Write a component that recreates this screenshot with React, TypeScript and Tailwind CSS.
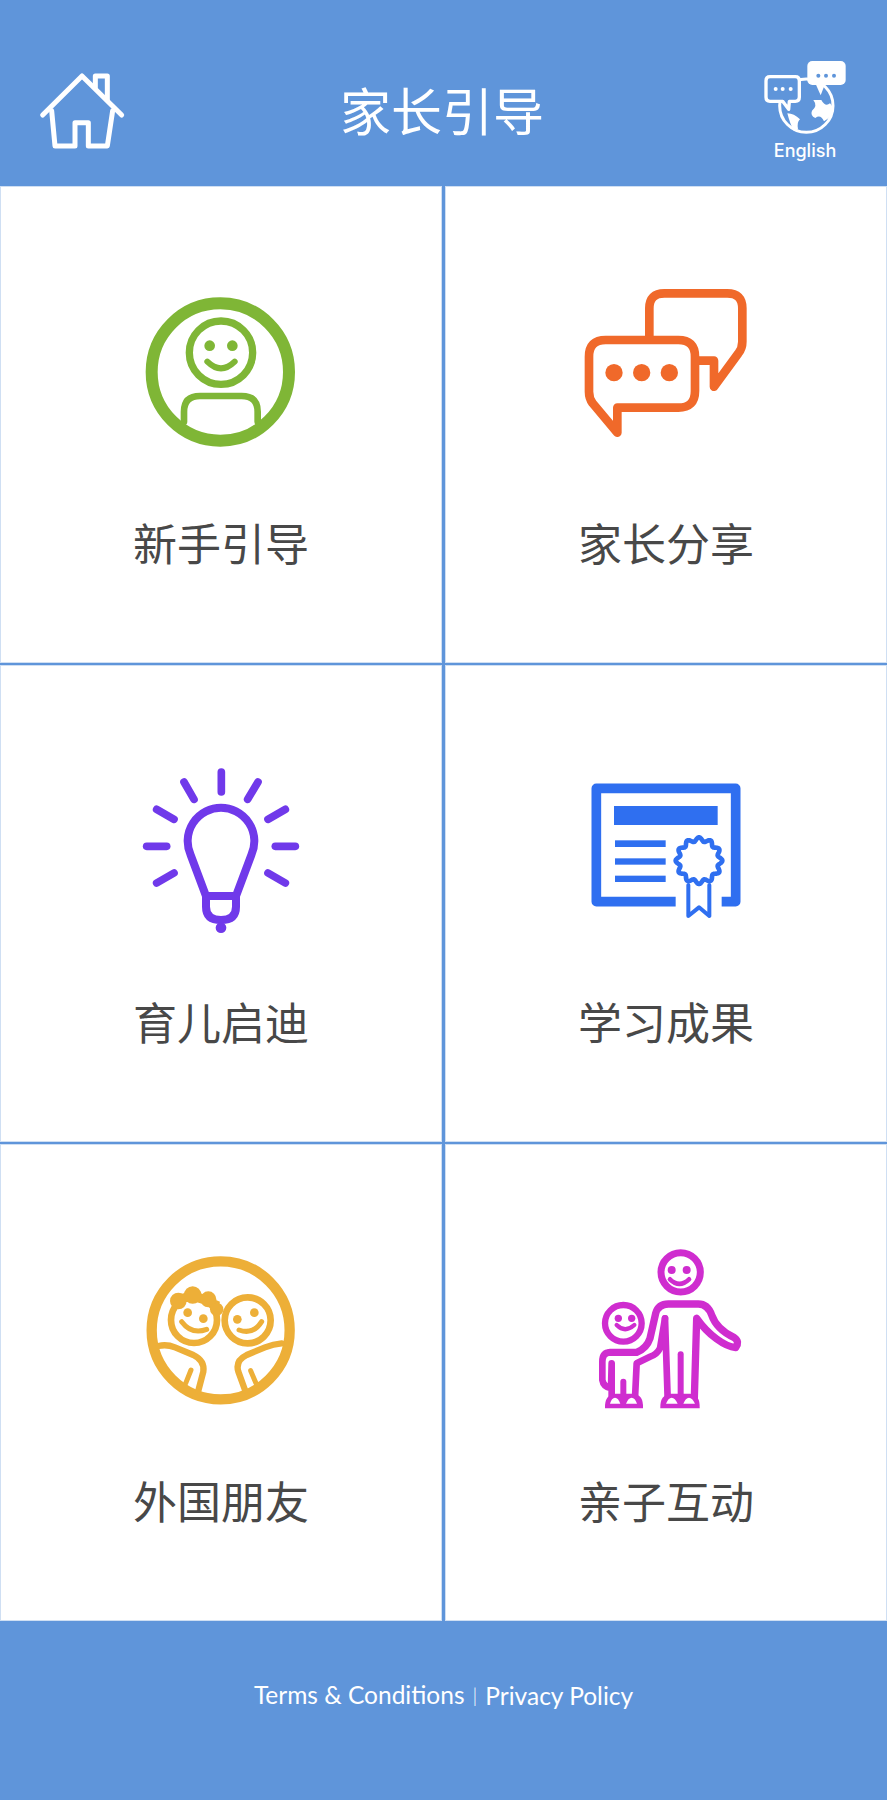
import type { ReactNode } from "react";

const rosette = () => {
  const pts: string[] = [];
  for (let i = 0; i < 180; i++) {
    const a = (i / 180) * Math.PI * 2;
    const r = 64 + 6 * Math.cos(a * 12);
    pts.push(`${(372 + r * Math.cos(a)).toFixed(1)},${(272 + r * Math.sin(a)).toFixed(1)}`);
  }
  return pts.join(" ");
};

function HomeIcon() {
  return (
    <svg width="120" height="120" viewBox="0 0 360 360" fill="none" stroke="#fff" strokeWidth="15" strokeLinejoin="round" strokeLinecap="round">
      <path d="M68 195 186 78 305 195" />
      <path d="M226 112V78H262V150" />
      <path d="M95 182 105 288H165V218H205V288H262L278 182" />
    </svg>
  );
}

function LanguageIcon() {
  return (
    <svg width="110" height="90" viewBox="0 0 330 270" fill="none">
      <circle cx="169" cy="167" r="80" stroke="#fff" strokeWidth="9" />
      <path d="M190 150Q204 168 186 182Q180 196 196 204Q212 192 222 214Q240 204 250 186Q250 170 240 160Q226 172 214 150Z" fill="#fff" />
      <path d="M112 190Q132 190 150 208Q140 216 144 238L132 244Q120 222 112 190Z" fill="#fff" />
      <rect x="172" y="33" width="115" height="72" rx="15" fill="#fff" />
      <path d="M196 100 212 136 226 100Z" fill="#fff" />
      <circle cx="205" cy="77" r="6" fill="#5f95da" />
      <circle cx="228" cy="77" r="6" fill="#5f95da" />
      <circle cx="252" cy="77" r="6" fill="#5f95da" />
      <path d="M60 80H136Q148 80 148 92V142Q148 154 136 154H118L116 178 98 154H60Q48 154 48 142V92Q48 80 60 80Z" fill="#5f95da" stroke="#fff" strokeWidth="10" strokeLinejoin="round" />
      <circle cx="77" cy="117" r="6" fill="#fff" />
      <circle cx="98" cy="117" r="6" fill="#fff" />
      <circle cx="122" cy="117" r="6" fill="#fff" />
    </svg>
  );
}

function IconBox({ viewBox, children }: { viewBox: string; children: ReactNode }) {
  return (
    <svg width="180" height="180" viewBox={viewBox} fill="none" strokeLinecap="round" strokeLinejoin="round">
      {children}
    </svg>
  );
}

function GuideIcon() {
  const c = "#7fb636";
  return (
    <IconBox viewBox="3 0 540 540">
      <circle cx="271" cy="276" r="206" stroke={c} strokeWidth="36" />
      <circle cx="273" cy="218" r="95" stroke={c} strokeWidth="22" />
      <circle cx="239" cy="197" r="16" fill={c} />
      <circle cx="307" cy="197" r="16" fill={c} />
      <path d="M232 245Q273 285 314 245" stroke={c} strokeWidth="18" />
      <path d="M162 425V395Q162 348 210 348H335Q383 348 383 395V425" stroke={c} strokeWidth="20" />
    </IconBox>
  );
}

function ShareIcon() {
  const c = "#f0692a";
  return (
    <IconBox viewBox="18 30 540 540">
      <path d="M238 205V115Q238 70 283 70H472Q517 70 517 115V215Q517 235 505 250L432 350V272H385" stroke={c} strokeWidth="26" />
      <path d="M142 413H325Q375 413 375 363V260Q375 210 325 210H107Q57 210 57 260V365Q57 385 68 400L142 488Z" stroke={c} strokeWidth="26" />
      <circle cx="132" cy="308" r="26" fill={c} />
      <circle cx="215" cy="308" r="26" fill={c} />
      <circle cx="298" cy="308" r="26" fill={c} />
    </IconBox>
  );
}

function BulbIcon() {
  const c = "#7039ea";
  const rays = [
    [274, 36, 274, 96],
    [162, 66, 192, 118],
    [384, 66, 353, 118],
    [80, 148, 132, 178],
    [466, 148, 414, 178],
    [50, 259, 110, 259],
    [436, 259, 496, 259],
    [80, 369, 132, 339],
    [466, 369, 414, 339],
  ];
  return (
    <IconBox viewBox="3 -3 540 540">
      {rays.map(([x1, y1, x2, y2]) => (
        <line key={`${x1}-${y1}`} x1={x1} y1={y1} x2={x2} y2={y2} stroke={c} strokeWidth="23" />
      ))}
      <path d="M228 408 182 285A100 100 0 1 1 364 285L318 408Z" stroke={c} strokeWidth="24" />
      <path d="M228 408V440Q228 480 273 480Q318 480 318 440V408" stroke={c} strokeWidth="24" />
      <circle cx="273" cy="503" r="16" fill={c} />
    </IconBox>
  );
}

function CertificateIcon() {
  const c = "#2f6ff0";
  return (
    <IconBox viewBox="3 -33 540 540">
      <path d="M302 395H64V55H482V395H440" stroke={c} strokeWidth="29" strokeLinecap="butt" />
      <rect x="117" y="108" width="311" height="57" fill={c} />
      <rect x="120" y="211" width="152" height="20" fill={c} />
      <rect x="120" y="265" width="152" height="19" fill={c} />
      <rect x="120" y="317" width="152" height="19" fill={c} />
      <polygon points={rosette()} stroke={c} strokeWidth="14" />
      <path d="M340 345V438L372 412 403 438V345" stroke={c} strokeWidth="12" />
    </IconBox>
  );
}

function FriendsIcon() {
  const c = "#edaf38";
  return (
    <IconBox viewBox="3 -6 540 540">
      <circle cx="272" cy="271" r="207" stroke={c} strokeWidth="31" />
      <circle cx="192" cy="240" r="69" stroke={c} strokeWidth="20" />
      <circle cx="353" cy="241" r="69" stroke={c} strokeWidth="20" />
      {/* curly hair */}
      <path d="M130 200Q190 165 262 215L270 185 190 150 130 170Z" fill={c} />
      <circle cx="145" cy="183" r="25" fill={c} />
      <circle cx="188" cy="165" r="26" fill={c} />
      <circle cx="235" cy="178" r="24" fill={c} />
      <circle cx="260" cy="208" r="20" fill={c} />
      <circle cx="173" cy="218" r="13" fill={c} />
      <circle cx="220" cy="236" r="13" fill={c} />
      <circle cx="322" cy="238" r="13" fill={c} />
      <circle cx="373" cy="218" r="13" fill={c} />
      <path d="M155 245Q185 285 230 268" stroke={c} strokeWidth="15" />
      <path d="M327 270Q370 285 395 245" stroke={c} strokeWidth="15" />
      <path d="M85 318Q110 312 135 322L190 345Q225 362 220 395L205 452" stroke={c} strokeWidth="19" />
      <path d="M455 310Q430 312 405 322L350 345Q315 362 325 395L345 450" stroke={c} strokeWidth="19" />
      <path d="M183 390 167 430" stroke={c} strokeWidth="15" />
      <path d="M362 392 378 430" stroke={c} strokeWidth="15" />
    </IconBox>
  );
}

function FamilyIcon() {
  const c = "#cf2dcf";
  return (
    <IconBox viewBox="-27 9 540 540">
      <circle cx="287" cy="112" r="59" stroke={c} strokeWidth="21" />
      <circle cx="260" cy="105" r="12" fill={c} />
      <circle cx="305" cy="105" r="12" fill={c} />
      <path d="M255 133Q283 160 312 133" stroke={c} strokeWidth="14" />
      <circle cx="115" cy="265" r="55" stroke={c} strokeWidth="19" />
      <circle cx="100" cy="250" r="11" fill={c} />
      <circle cx="140" cy="250" r="11" fill={c} />
      <path d="M95 270Q120 295 148 270" stroke={c} strokeWidth="13" />
      {/* adult outline, running into the child's shoulder */}
      <path d="M75 352H155Q185 340 195 310L212 235Q220 207 250 207H340Q368 207 380 240C392 275 420 295 448 308Q465 320 452 338C420 335 370 300 335 250L328 490" stroke={c} strokeWidth="22" />
      <path d="M240 250 225 340Q215 360 195 365L155 385 150 490" stroke={c} strokeWidth="20" />
      <path d="M240 250 248 490" stroke={c} strokeWidth="20" />
      <path d="M287 358V490" stroke={c} strokeWidth="18" />
      {/* child */}
      <path d="M75 352Q52 352 52 380V435Q55 455 78 460L80 385V490" stroke={c} strokeWidth="20" />
      <path d="M115 440V490" stroke={c} strokeWidth="18" />
      {/* feet */}
      <path d="M60 520Q58 478 92 476H145Q176 478 174 520Z" fill={c} />
      <path d="M226 520Q224 478 258 476H315Q346 478 344 520Z" fill={c} />
      <g fill="#fff">
        <path d="M75 506Q80 488 90 488Q100 488 106 506Z" />
        <path d="M123 506Q130 488 140 488Q150 488 156 506Z" />
        <path d="M243 506Q250 488 260 488Q270 488 278 506Z" />
        <path d="M295 506Q302 488 312 488Q322 488 330 506Z" />
      </g>
    </IconBox>
  );
}

const items = [
  { label: "新手引导", icon: <GuideIcon /> },
  { label: "家长分享", icon: <ShareIcon /> },
  { label: "育儿启迪", icon: <BulbIcon /> },
  { label: "学习成果", icon: <CertificateIcon /> },
  { label: "外国朋友", icon: <FriendsIcon /> },
  { label: "亲子互动", icon: <FamilyIcon /> },
];

export default function App() {
  return (
    <div className="w-[887px] h-[1800px] bg-[#5f95da] font-['Noto_Sans_CJK_SC',sans-serif]">
      <header className="h-[186px] flex items-start justify-between pl-[20px] pr-[27px] pt-[50px]">
        <HomeIcon />
        <h1 className="flex-1 pr-[6px] pt-[27px] text-center text-[51px] leading-[64px] font-normal text-white">家长引导</h1>
        <div className="w-[110px] flex flex-col items-center">
          <LanguageIcon />
          <span className="text-[18px] leading-[22px] font-medium text-white font-['Inter',sans-serif]">English</span>
        </div>
      </header>

      <main className="grid grid-cols-[442px_442px] gap-x-[3px] gap-y-[2px]">
        {items.map((item) => (
          <div key={item.label} className="h-[477px] bg-white border border-[#cfdff3] flex flex-col items-center pt-[93px]">
            {item.icon}
            <p className="mt-[52px] text-[44px] leading-[60px] font-normal text-[#484848]">{item.label}</p>
          </div>
        ))}
      </main>

      <footer className="h-[179px] pt-[57px] flex justify-center items-start gap-[8px] text-[24.5px] leading-[34px] font-normal text-white font-['Lato',sans-serif]">
        <span>Terms &amp; Conditions</span>
        <span className="text-[20px] font-light">|</span>
        <span className="mt-[1px]">Privacy Policy</span>
      </footer>
    </div>
  );
}
